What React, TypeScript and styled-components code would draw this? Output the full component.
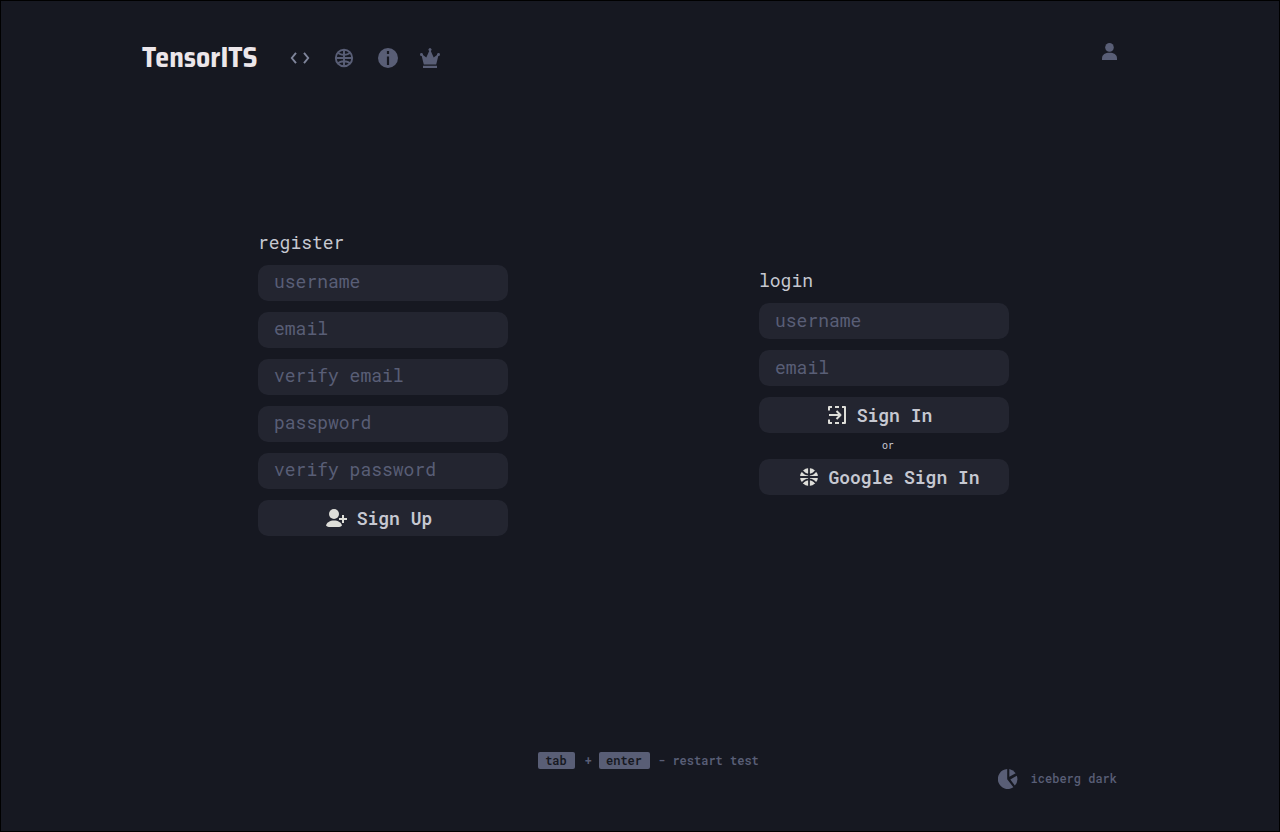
import React from "react";
import styled, { createGlobalStyle } from "styled-components";

const color = {
  bg: "#161821",
  field: "#232530",
  sub: "#595e76",
  code: "#7f859b",
  text: "#c6c8d1",
  icon: "#deded9",
  logo: "#ece6ea",
};

const GlobalStyle = createGlobalStyle`
  *, *::before, *::after { box-sizing: border-box; }
  body {
    margin: 0;
    background: ${color.bg};
    color: ${color.text};
    font-family: "Roboto Mono", "DejaVu Sans Mono", "Liberation Mono", monospace;
    font-size: 18px;
  }
  button, input { font: inherit; }
`;

const Page = styled.div`
  min-height: 100vh;
  display: flex;
  flex-direction: column;
  border: 1px solid #000;
  padding: 40px 162px 42px 141px;
`;

const Header = styled.header`
  display: flex;
  align-items: center;
  height: 36px;
`;

const Logo = styled.a`
  color: ${color.logo};
  font-family: "Saira SemiCondensed", "Saira Semi Condensed", Roboto, "Liberation Sans", sans-serif;
  font-size: 28px;
  font-weight: 700;
  line-height: 32px;
  padding-bottom: 4px;
  text-decoration: none;
  width: 148px;
`;

const Nav = styled.nav`
  display: flex;
  align-items: center;
  gap: 22px;
  flex: 1;
  padding-bottom: 2px;
`;

const NavLink = styled.a`
  display: flex;
  color: ${color.sub};
`;

const AccountLink = styled(NavLink)`
  align-self: flex-start;
`;

const Main = styled.main`
  flex: 1;
  display: flex;
  justify-content: space-between;
  align-items: center;
  padding: 0 108px 64px 116px;
`;

const Form = styled.form`
  display: flex;
  flex-direction: column;
  gap: 11px;
  width: 250px;
`;

const Title = styled.h2`
  margin: 0;
  font-size: 18px;
  font-weight: 400;
  line-height: 24px;
`;

const Field = styled.input`
  width: 100%;
  height: 36px;
  padding: 0 16px 3px;
  border: 0;
  border-radius: 10px;
  background: ${color.field};
  color: ${color.text};
  &::placeholder { color: ${color.sub}; opacity: 1; }
`;

const SubmitButton = styled.button<{ $wide?: boolean }>`
  display: flex;
  align-items: center;
  justify-content: center;
  gap: 10px;
  width: 100%;
  height: 36px;
  padding: ${(p) => (p.$wide ? "0 0 0 12px" : "0 8px 0 0")};
  border: 0;
  border-radius: 10px;
  background: ${color.field};
  color: ${color.text};
  font-weight: 600;
  white-space: nowrap;
  cursor: pointer;
  svg { flex: none; color: ${color.icon}; }
`;

const Actions = styled.div`
  display: flex;
  flex-direction: column;
  padding-bottom: 2px;
`;

const Or = styled.span`
  font-size: 10px;
  line-height: 26px;
  padding-left: 8px;
  text-align: center;
`;

const Footer = styled.footer`
  display: flex;
  flex-direction: column;
  color: ${color.sub};
  font-size: 12px;
  line-height: 16px;
`;

const Hint = styled.p`
  display: flex;
  align-items: flex-start;
  justify-content: center;
  margin: 0;
  padding-left: 38px;
  font-weight: 600;
`;

const Key = styled.kbd`
  padding: 0 8px 1px 7px;
  border-radius: 2px;
  background: ${color.sub};
  color: ${color.bg};
  font: inherit;
`;

const Plus = styled.span`
  padding: 0 7px 0 10px;
`;

const HintText = styled.span`
  padding-left: 8px;
`;

const ThemeButton = styled.button`
  display: flex;
  align-items: flex-start;
  align-self: flex-end;
  gap: 13px;
  padding: 0;
  border: 0;
  background: none;
  color: inherit;
  font-weight: 500;
  line-height: 18px;
  cursor: pointer;
`;

const CodeIcon = () => (
  <svg width="22" height="20" viewBox="0 0 22 20" fill="none" stroke={color.code} strokeWidth="1.9">
    <path d="M6 4.8 1.8 10 6 15.2M14 4.8 18.2 10 14 15.2" />
  </svg>
);

const GlobeIcon = () => (
  <svg width="22" height="20" viewBox="0 0 22 20" fill="none" stroke="currentColor" strokeWidth="1.9">
    <circle cx="10" cy="10" r="8.2" />
    <path d="M10 1.7v16.6M1.7 10h16.6M4 4.5C6.5 7.6 13.5 7.6 16 4.5M4 15.5C6.5 12.4 13.5 12.4 16 15.5" />
  </svg>
);

const InfoIcon = () => (
  <svg width="20" height="20" viewBox="0 0 20 20">
    <circle cx="10" cy="10" r="10" fill="currentColor" />
    <path d="M8.9 3h2.2v3H8.9zM8.9 8.5h2.2V17H8.9z" fill={color.bg} />
  </svg>
);

const CrownIcon = () => (
  <svg width="20" height="20" viewBox="0 0 20 20" fill="currentColor">
    <path d="M3.8 16.5 1.7 8.1A1.5 1.5 0 1 1 3 6.9L6.3 9.6 9.2 3A1.5 1.5 0 1 1 10.8 3L13.7 9.6 17 6.9A1.5 1.5 0 1 1 18.3 8.1L16.2 16.5zM3 17.8h14V20H3z" />
  </svg>
);

const UserIcon = () => (
  <svg width="16" height="20" viewBox="0 0 16 20" fill="currentColor">
    <circle cx="8.5" cy="6.4" r="4.3" />
    <path d="M1 19v-1.5C1 13.5 4.5 11.8 8.5 11.8s7.5 1.7 7.5 5.7V19z" />
  </svg>
);

const UserPlusIcon = () => (
  <svg width="21" height="20" viewBox="0 0 21 20" fill="currentColor">
    <circle cx="8" cy="6" r="5" />
    <path d="M0 17.5C.6 14.5 4 12.5 8 12.5s7.4 2 8 5c-1 1-2.500 1.500-4 1.500H4c-1.500 0-3-.5-4-1.500z" />
    <path d="M17 7v8M13 11h8" stroke="currentColor" strokeWidth="2" />
  </svg>
);

const SignInIcon = () => (
  <svg width="19" height="20" viewBox="0 0 19 20" fill="none" stroke="currentColor" strokeWidth="2" strokeLinejoin="round">
    <path d="M1 5.5V2h3M7 2h4M14 2h3v16h-3M11 18H7M4 18H1v-3.5M1 10h12M8.5 6l4 4-4 4" />
  </svg>
);

const BallIcon = () => (
  <svg width="18" height="20" viewBox="0 0 18 20">
    <circle cx="9" cy="10" r="9" fill="currentColor" />
    <path
      d="M9 1v18M0 10h18M2 3.5C5.5 9 12.5 9 16 3.5M2 16.5C5.5 11 12.5 11 16 16.5"
      fill="none"
      stroke={color.field}
      strokeWidth="1.8"
    />
  </svg>
);

const ThemeIcon = () => (
  <svg width="20" height="20" viewBox="0 0 20 20" fill="currentColor">
    <path d="M9.2 0v10.3l6.2 8A10 10 0 1 1 9.2 0z" />
    <path d="M11.3 0a10 10 0 0 1 6.4 4.2L11.3 7.7z" />
    <path d="M18.8 6.8a10 10 0 0 1-2 9.8L12.3 10.5z" />
  </svg>
);

const registerFields = [
  { name: "username", label: "username", type: "text" },
  { name: "email", label: "email", type: "email" },
  { name: "verifyEmail", label: "verify email", type: "email" },
  { name: "password", label: "passpword", type: "password" },
  { name: "verifyPassword", label: "verify password", type: "password" },
];

const loginFields = [
  { name: "loginUsername", label: "username", type: "text" },
  { name: "loginEmail", label: "email", type: "email" },
];

export default function App() {
  return (
    <>
      <GlobalStyle />
      <Page>
        <Header>
          <Logo href="#">TensorITS</Logo>
          <Nav>
            <NavLink href="#code" aria-label="Code"><CodeIcon /></NavLink>
            <NavLink href="#language" aria-label="Language"><GlobeIcon /></NavLink>
            <NavLink href="#about" aria-label="About"><InfoIcon /></NavLink>
            <NavLink href="#ranking" aria-label="Ranking"><CrownIcon /></NavLink>
          </Nav>
          <AccountLink href="#account" aria-label="Account"><UserIcon /></AccountLink>
        </Header>

        <Main>
          <Form onSubmit={(e) => e.preventDefault()}>
            <Title>register</Title>
            {registerFields.map((f) => (
              <Field key={f.name} name={f.name} type={f.type} placeholder={f.label} aria-label={f.label} />
            ))}
            <SubmitButton type="submit"><UserPlusIcon />Sign Up</SubmitButton>
          </Form>

          <Form onSubmit={(e) => e.preventDefault()}>
            <Title>login</Title>
            {loginFields.map((f) => (
              <Field key={f.name} name={f.name} type={f.type} placeholder={f.label} aria-label={f.label} />
            ))}
            <Actions>
              <SubmitButton type="submit"><SignInIcon />Sign In</SubmitButton>
              <Or>or</Or>
              <SubmitButton type="button" $wide><BallIcon />Google Sign In</SubmitButton>
            </Actions>
          </Form>
        </Main>

        <Footer>
          <Hint>
            <Key>tab</Key>
            <Plus>+</Plus>
            <Key>enter</Key>
            <HintText>- restart test</HintText>
          </Hint>
          <ThemeButton type="button"><ThemeIcon />iceberg dark</ThemeButton>
        </Footer>
      </Page>
    </>
  );
}
